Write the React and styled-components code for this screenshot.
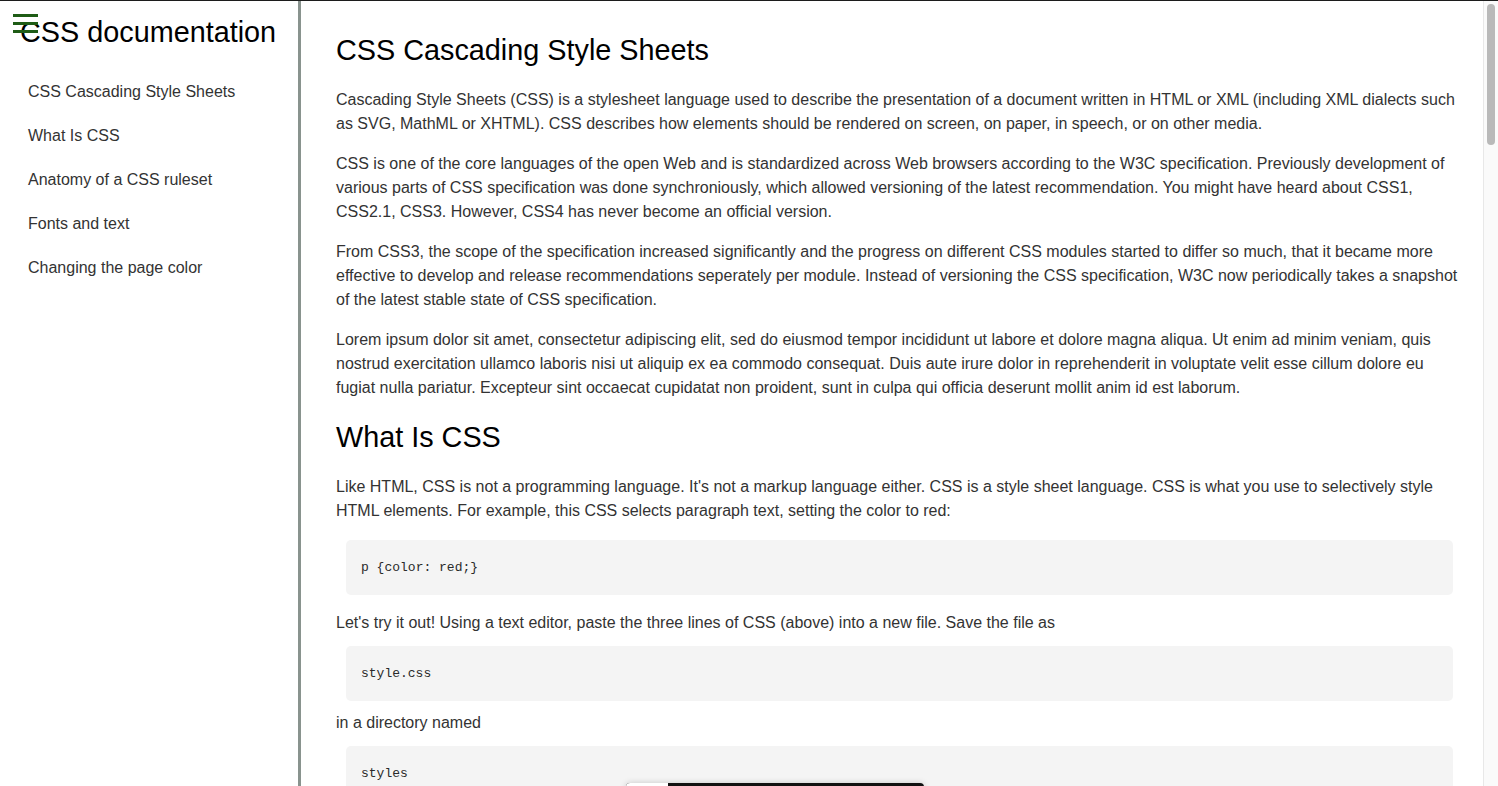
import React from 'react'
import styled, { createGlobalStyle } from 'styled-components'

const GlobalStyle = createGlobalStyle`
  html, body {
    margin: 0;
    padding: 0;
    height: 100%;
    overflow: hidden;
  }
  body {
    font-family: 'Liberation Sans', Arial, sans-serif;
    background: #fff;
  }
`

const Page = styled.div`
  display: flex;
  height: 100vh;
  box-sizing: border-box;
  border-top: 1px solid #1c1c1c;
`

const Sidebar = styled.nav`
  position: relative;
  flex: 0 0 298px;
  border-right: 3px solid #89938e;
`

const MenuToggle = styled.div`
  position: absolute;
  top: 13px;
  left: 13px;
  width: 25px;
  display: flex;
  flex-direction: column;
  gap: 5px;
`

const MenuBar = styled.span`
  display: block;
  height: 3px;
  background: #1f5c16;
`

const SideTitle = styled.header`
  margin: 14px 0 0 20px;
  font-size: 28.8px;
  line-height: 34px;
  color: #000;
`

const NavList = styled.ul`
  list-style: none;
  margin: 21px 0 0;
  padding: 0;
`

const NavLink = styled.li`
  height: 44px;
  line-height: 44px;
  padding-left: 28px;
  font-size: 16px;
  color: #333;
`

const Main = styled.main`
  flex: 1;
  min-width: 0;
  overflow: hidden;
  padding: 12px 25px 0 35px;
`

const ScrollTrack = styled.div`
  box-sizing: border-box;
  flex: 0 0 15px;
  padding: 3px 3px 0 3px;
  background: #fafafa;
  border-left: 1px solid #e8e8e8;
`

const ScrollThumb = styled.div`
  height: 141px;
  border-radius: 4px;
  background: #b9b9b9;
`

const Heading = styled.h2`
  margin: 21px 0 21px;
  font-size: 28.8px;
  font-weight: 400;
  line-height: 33px;
  color: #000;
`

const Text = styled.p`
  margin: 0 0 ${p => (p.$tight ? '0' : '16px')};
  font-size: 16px;
  line-height: 24px;
  color: #333;
`

const Code = styled.pre`
  margin: ${p => (p.$tight ? '11px 5px 10px 10px' : '17px 5px 16px 10px')};
  padding: 20px 15px;
  background: #f4f4f4;
  border-radius: 5px;
  font-family: 'Liberation Mono', 'Courier New', monospace;
  font-size: 13px;
  line-height: 15px;
  color: #2a2a2a;
`

const Toast = styled.div`
  position: fixed;
  left: 626px;
  top: 783px;
  width: 298px;
  height: 40px;
  display: flex;
  border-radius: 4px 4px 0 0;
  overflow: hidden;
  background: #111;
  box-shadow: 0 0 6px rgba(0, 0, 0, 0.18);
`

const ToastTab = styled.span`
  width: 42px;
  background: #fff;
`

const links = [
  'CSS Cascading Style Sheets',
  'What Is CSS',
  'Anatomy of a CSS ruleset',
  'Fonts and text',
  'Changing the page color'
]

export default function App () {
  return (
    <>
      <GlobalStyle />
      <Page>
        <Sidebar>
          <SideTitle>CSS documentation</SideTitle>
          <MenuToggle>
            <MenuBar />
            <MenuBar />
            <MenuBar />
          </MenuToggle>
          <NavList>
            {links.map(link => (
              <NavLink key={link}>{link}</NavLink>
            ))}
          </NavList>
        </Sidebar>
        <Main>
          <section>
            <Heading as='h1'>CSS Cascading Style Sheets</Heading>
            <Text>
              Cascading Style Sheets (CSS) is a stylesheet language used to describe the presentation of a document written in HTML or XML (including XML dialects such as{'\u00a0'}SVG, MathML or XHTML). CSS describes how elements should be rendered on screen, on paper, in speech, or on other media.
            </Text>
            <Text>
              CSS is one of the core languages of the open Web and is standardized across Web browsers according to the W3C specification. Previously development of various parts of CSS specification was done synchroniously, which allowed versioning of the latest recommendation. You might have heard about CSS1, CSS2.1, CSS3. However, CSS4 has never become an official version.
            </Text>
            <Text>
              From CSS3, the scope of the specification increased significantly and the progress on different CSS modules started to differ so much, that it became more effective to develop and release recommendations seperately per module. Instead of versioning the CSS specification, W3C now periodically takes a snapshot of the latest stable state of CSS specification.
            </Text>
            <Text>
              Lorem ipsum dolor sit amet, consectetur adipiscing elit, sed do eiusmod tempor incididunt ut labore et dolore magna aliqua. Ut enim ad minim veniam, quis nostrud exercitation ullamco laboris nisi ut aliquip ex ea commodo consequat. Duis aute irure dolor in reprehenderit in voluptate velit esse cillum dolore eu fugiat nulla pariatur. Excepteur sint occaecat cupidatat non proident, sunt in culpa qui officia deserunt mollit anim id est laborum.
            </Text>
          </section>
          <section>
            <Heading>What Is CSS</Heading>
            <Text>
              Like HTML, CSS is not a programming language. It's not a markup language either. CSS is a style sheet language. CSS is what you use to selectively style HTML elements. For example, this CSS selects paragraph text, setting the color to red:
            </Text>
            <Code>p {'{'}color: red;{'}'}</Code>
            <Text $tight>
              Let's try it out! Using a text editor, paste the three lines of CSS (above) into a new file. Save the file as
            </Text>
            <Code $tight>style.css</Code>
            <Text $tight>in a directory named</Text>
            <Code $tight>styles</Code>
          </section>
        </Main>
        <ScrollTrack>
          <ScrollThumb />
        </ScrollTrack>
      </Page>
      <Toast>
        <ToastTab />
      </Toast>
    </>
  )
}
